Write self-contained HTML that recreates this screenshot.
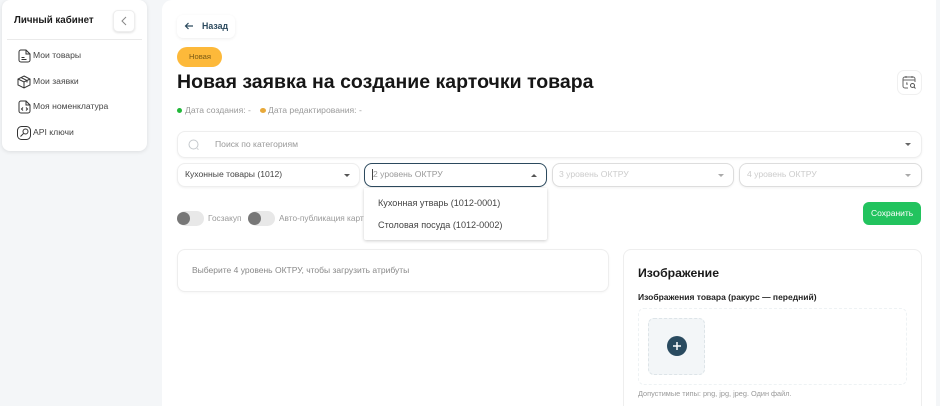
<!DOCTYPE html>
<html lang="ru"><head><meta charset="utf-8"><style>
*{box-sizing:border-box}
html,body{margin:0;padding:0;width:940px;height:406px;overflow:hidden}
#w{position:absolute;left:0;top:0;width:940px;height:406px;overflow:hidden;background:#f4f6f8;font-family:"Liberation Sans",sans-serif;color:#222}
.a{position:absolute}
.t{position:absolute;white-space:nowrap;line-height:14px}
.sel{position:absolute;top:163px;height:24px;background:#fff;border-radius:8px;border:1px solid #e3e3e3;box-shadow:0 1px 2px rgba(0,0,0,.06)}
.car{position:absolute;width:0;height:0;border-left:3px solid transparent;border-right:3px solid transparent;border-top:3px solid #777}
.knob{position:absolute;width:13px;height:13px;border-radius:50%;background:#777}
.tr{position:absolute;width:26px;height:15px;border-radius:8px;background:#e8e8e8}
svg{position:absolute;overflow:visible}
</style></head><body><div id="w">
<div class="a" style="left:2px;top:0;width:145px;height:151px;background:#fff;border-radius:8px;box-shadow:0 1px 4px rgba(0,0,0,.1)"></div>
<div class="t" style="left:14px;top:14px;font-size:9.750px;font-weight:700;color:#1c1c1c">Личный кабинет</div>
<div class="a" style="left:113px;top:10px;width:22px;height:22px;background:#fff;border-radius:5px;border:1px solid #eee;box-shadow:0 1px 2px rgba(0,0,0,.12)"></div>
<svg style="left:120px;top:16px" width="8" height="10" viewBox="0 0 8 10"><path d="M6 1L2 5l4 4" fill="none" stroke="#888" stroke-width="1"/></svg>
<div class="a" style="left:7px;top:39px;width:135px;height:1px;background:#eaeaea"></div>
<svg style="left:18px;top:49px" width="13" height="14" viewBox="0 0 13 14"><path d="M3 1h5l4 4v6a2 2 0 0 1-2 2H3a2 2 0 0 1-2-2V3a2 2 0 0 1 2-2zM8 1v4h4M3.500 8.500h3M3.500 10.500h5" fill="none" stroke="#333" stroke-width="1"/></svg>
<div class="t" style="left:33px;top:48px;font-size:8.600px;color:#444">Мои товары</div>
<svg style="left:17px;top:75px" width="14" height="14" viewBox="0 0 14 14"><path d="M7 1l6 3v6l-6 3-6-3V4zM1 4l6 3 6-3M7 7v6M4 2.500l6 3v2" fill="none" stroke="#333" stroke-width="1"/></svg>
<div class="t" style="left:33px;top:74px;font-size:8.600px;color:#444">Мои заявки</div>
<svg style="left:18px;top:100px" width="13" height="14" viewBox="0 0 13 14"><path d="M3 1h5l4 4v6a2 2 0 0 1-2 2H3a2 2 0 0 1-2-2V3a2 2 0 0 1 2-2zM8 1v4h4M5 7.500L3.500 9 5 10.500M8 7.500L9.500 9 8 10.500" fill="none" stroke="#333" stroke-width="1"/></svg>
<div class="t" style="left:33px;top:99px;font-size:8.600px;color:#444">Моя номенклатура</div>
<svg style="left:17px;top:126px" width="14" height="14" viewBox="0 0 14 14"><rect x=".5" y=".5" width="13" height="13" rx="4" fill="none" stroke="#333"/><circle cx="8.500" cy="5.500" r="2.500" fill="none" stroke="#333"/><path d="M6.500 7.500L3.500 10.500" stroke="#333" fill="none"/></svg>
<div class="t" style="left:33px;top:125px;font-size:8.650px;color:#444">API ключи</div>

<div class="a" style="left:162px;top:0;width:774px;height:406px;background:#fff;border-radius:10px 0 0 0"></div>
<div class="a" style="left:177px;top:15px;width:58px;height:23px;background:#fff;border-radius:6px;box-shadow:0 1px 3px rgba(0,0,0,.07)"></div>
<svg style="left:184px;top:21px" width="10" height="10" viewBox="0 0 10 10"><path d="M9 5H1.500M4.500 2L1.500 5l3 3" fill="none" stroke="#2c4a5e" stroke-width="1.200"/></svg>
<div class="t" style="left:202px;top:19px;font-size:8.800px;font-weight:700;color:#2c4a5e">Назад</div>
<div class="a" style="left:177px;top:47px;width:45px;height:20px;background:#fdb93a;border-radius:10px"></div>
<div class="t" style="left:189px;top:50px;font-size:7.600px;color:#7a5a14">Новая</div>
<div class="t" style="left:177px;top:70px;font-size:19.500px;line-height:24px;font-weight:700;color:#161616">Новая заявка на создание карточки товара</div>
<div class="a" style="left:897px;top:70px;width:25px;height:25px;background:#fff;border:1px solid #f0f0f0;border-radius:7px"></div>
<svg style="left:902px;top:75px" width="15" height="15" viewBox="0 0 15 15"><path d="M6 13H3a2 2 0 0 1-2-2V4a2 2 0 0 1 2-2h8a2 2 0 0 1 2 2v3M1 5h12M4 1v2M10 1v2M4 8h1v2" fill="none" stroke="#666" stroke-width="1"/><circle cx="10.500" cy="10.500" r="2" fill="none" stroke="#555"/><path d="M12 12l1.500 1.500" stroke="#555"/></svg>
<div class="a" style="left:177px;top:108px;width:5px;height:5px;border-radius:50%;background:#22b83a"></div>
<div class="t" style="left:185px;top:103px;font-size:8.600px;color:#9a9a9a">Дата создания: -</div>
<div class="a" style="left:260px;top:108px;width:6px;height:5px;border-radius:50%;background:#e8a93a"></div>
<div class="t" style="left:268px;top:103px;font-size:8.600px;color:#9a9a9a">Дата редактирования: -</div>

<div class="a" style="left:177px;top:131px;width:745px;height:27px;background:#fff;border-radius:8px;border:1px solid #eee;box-shadow:0 1px 2px rgba(0,0,0,.05)"></div>
<svg style="left:188px;top:139px" width="12" height="12" viewBox="0 0 12 12"><circle cx="5.500" cy="5.500" r="4.500" fill="none" stroke="#c4c8cc"/><path d="M9 9.500l1.500 1" stroke="#c4c8cc"/></svg>
<div class="t" style="left:215px;top:137px;font-size:8.600px;color:#999">Поиск по категориям</div>
<div class="car" style="left:905px;top:143px;border-top-color:#666"></div>

<div class="sel" style="left:177px;width:183px;border-color:#eee"></div>
<div class="t" style="left:185px;top:167px;font-size:8.600px;color:#444">Кухонные товары (1012)</div>
<div class="car" style="left:344px;top:174px;border-top-color:#555"></div>
<div class="sel" style="left:364px;width:183px;border:1.500px solid #2c4a5e"></div>
<div class="a" style="left:372px;top:169px;width:1px;height:11px;background:#444"></div>
<div class="t" style="left:373px;top:167px;font-size:8.600px;color:#999">2 уровень ОКТРУ</div>
<div class="car" style="left:531px;top:174px;border-top:0;border-bottom:3px solid #555"></div>
<div class="sel" style="left:552px;width:182px;border:1.500px solid #ddd"></div>
<div class="t" style="left:559px;top:167px;font-size:8.600px;color:#ccc">3 уровень ОКТРУ</div>
<div class="car" style="left:718px;top:174px;border-top-color:#aaa"></div>
<div class="sel" style="left:739px;width:183px;border:1.500px solid #ddd"></div>
<div class="t" style="left:747px;top:167px;font-size:8.600px;color:#ccc">4 уровень ОКТРУ</div>
<div class="car" style="left:905px;top:174px;border-top-color:#aaa"></div>

<div class="tr" style="left:178px;top:211px"></div><div class="knob" style="left:177px;top:212px"></div>
<div class="t" style="left:208px;top:211px;font-size:8.300px;color:#999">Госзакуп</div>
<div class="tr" style="left:249px;top:211px"></div><div class="knob" style="left:248px;top:212px"></div>
<div class="t" style="left:279px;top:211px;font-size:8.300px;color:#999">Авто-публикация карточки</div>

<div class="a" style="left:364px;top:188px;width:183px;height:52px;background:#fff;box-shadow:0 1px 3px rgba(0,0,0,.2);border-radius:0 0 2px 2px"></div>
<div class="t" style="left:378px;top:196px;font-size:9.100px;color:#444">Кухонная утварь (1012-0001)</div>
<div class="t" style="left:378px;top:218px;font-size:9.100px;color:#444">Столовая посуда (1012-0002)</div>

<div class="a" style="left:863px;top:202px;width:58px;height:23px;background:#22c35e;border-radius:6px"></div>
<div class="t" style="left:871px;top:206px;font-size:8.500px;color:#fff">Сохранить</div>

<div class="a" style="left:177px;top:249px;width:432px;height:43px;background:#fff;border-radius:8px;border:1px solid #eee;box-shadow:0 1px 2px rgba(0,0,0,.04)"></div>
<div class="t" style="left:192px;top:263px;font-size:8.500px;color:#888">Выберите 4 уровень ОКТРУ, чтобы загрузить атрибуты</div>

<div class="a" style="left:623px;top:249px;width:299px;height:170px;background:#fff;border-radius:8px;border:1px solid #eee"></div>
<div class="t" style="left:638px;top:265px;font-size:12.250px;font-weight:700;color:#1a1a1a;line-height:16px">Изображение</div>
<div class="t" style="left:638px;top:290px;font-size:8.500px;font-weight:700;color:#222">Изображения товара (ракурс — передний)</div>
<div class="a" style="left:638px;top:308px;width:269px;height:77px;border:1px dashed #eef2f4;border-radius:6px"></div>
<div class="a" style="left:648px;top:318px;width:57px;height:57px;background:#f3f6f8;border:1px dashed #dde4e8;border-radius:6px"></div>
<div class="a" style="left:667px;top:336px;width:20px;height:20px;border-radius:50%;background:#2a4b60"></div>
<svg style="left:672px;top:341px" width="10" height="10" viewBox="0 0 10 10"><path d="M5 1v8M1 5h8" stroke="#fff" stroke-width="1.500"/></svg>
<div class="t" style="left:638px;top:387px;font-size:7.330px;color:#999">Допустимые типы: png, jpg, jpeg. Один файл.</div>
</div></body></html>
